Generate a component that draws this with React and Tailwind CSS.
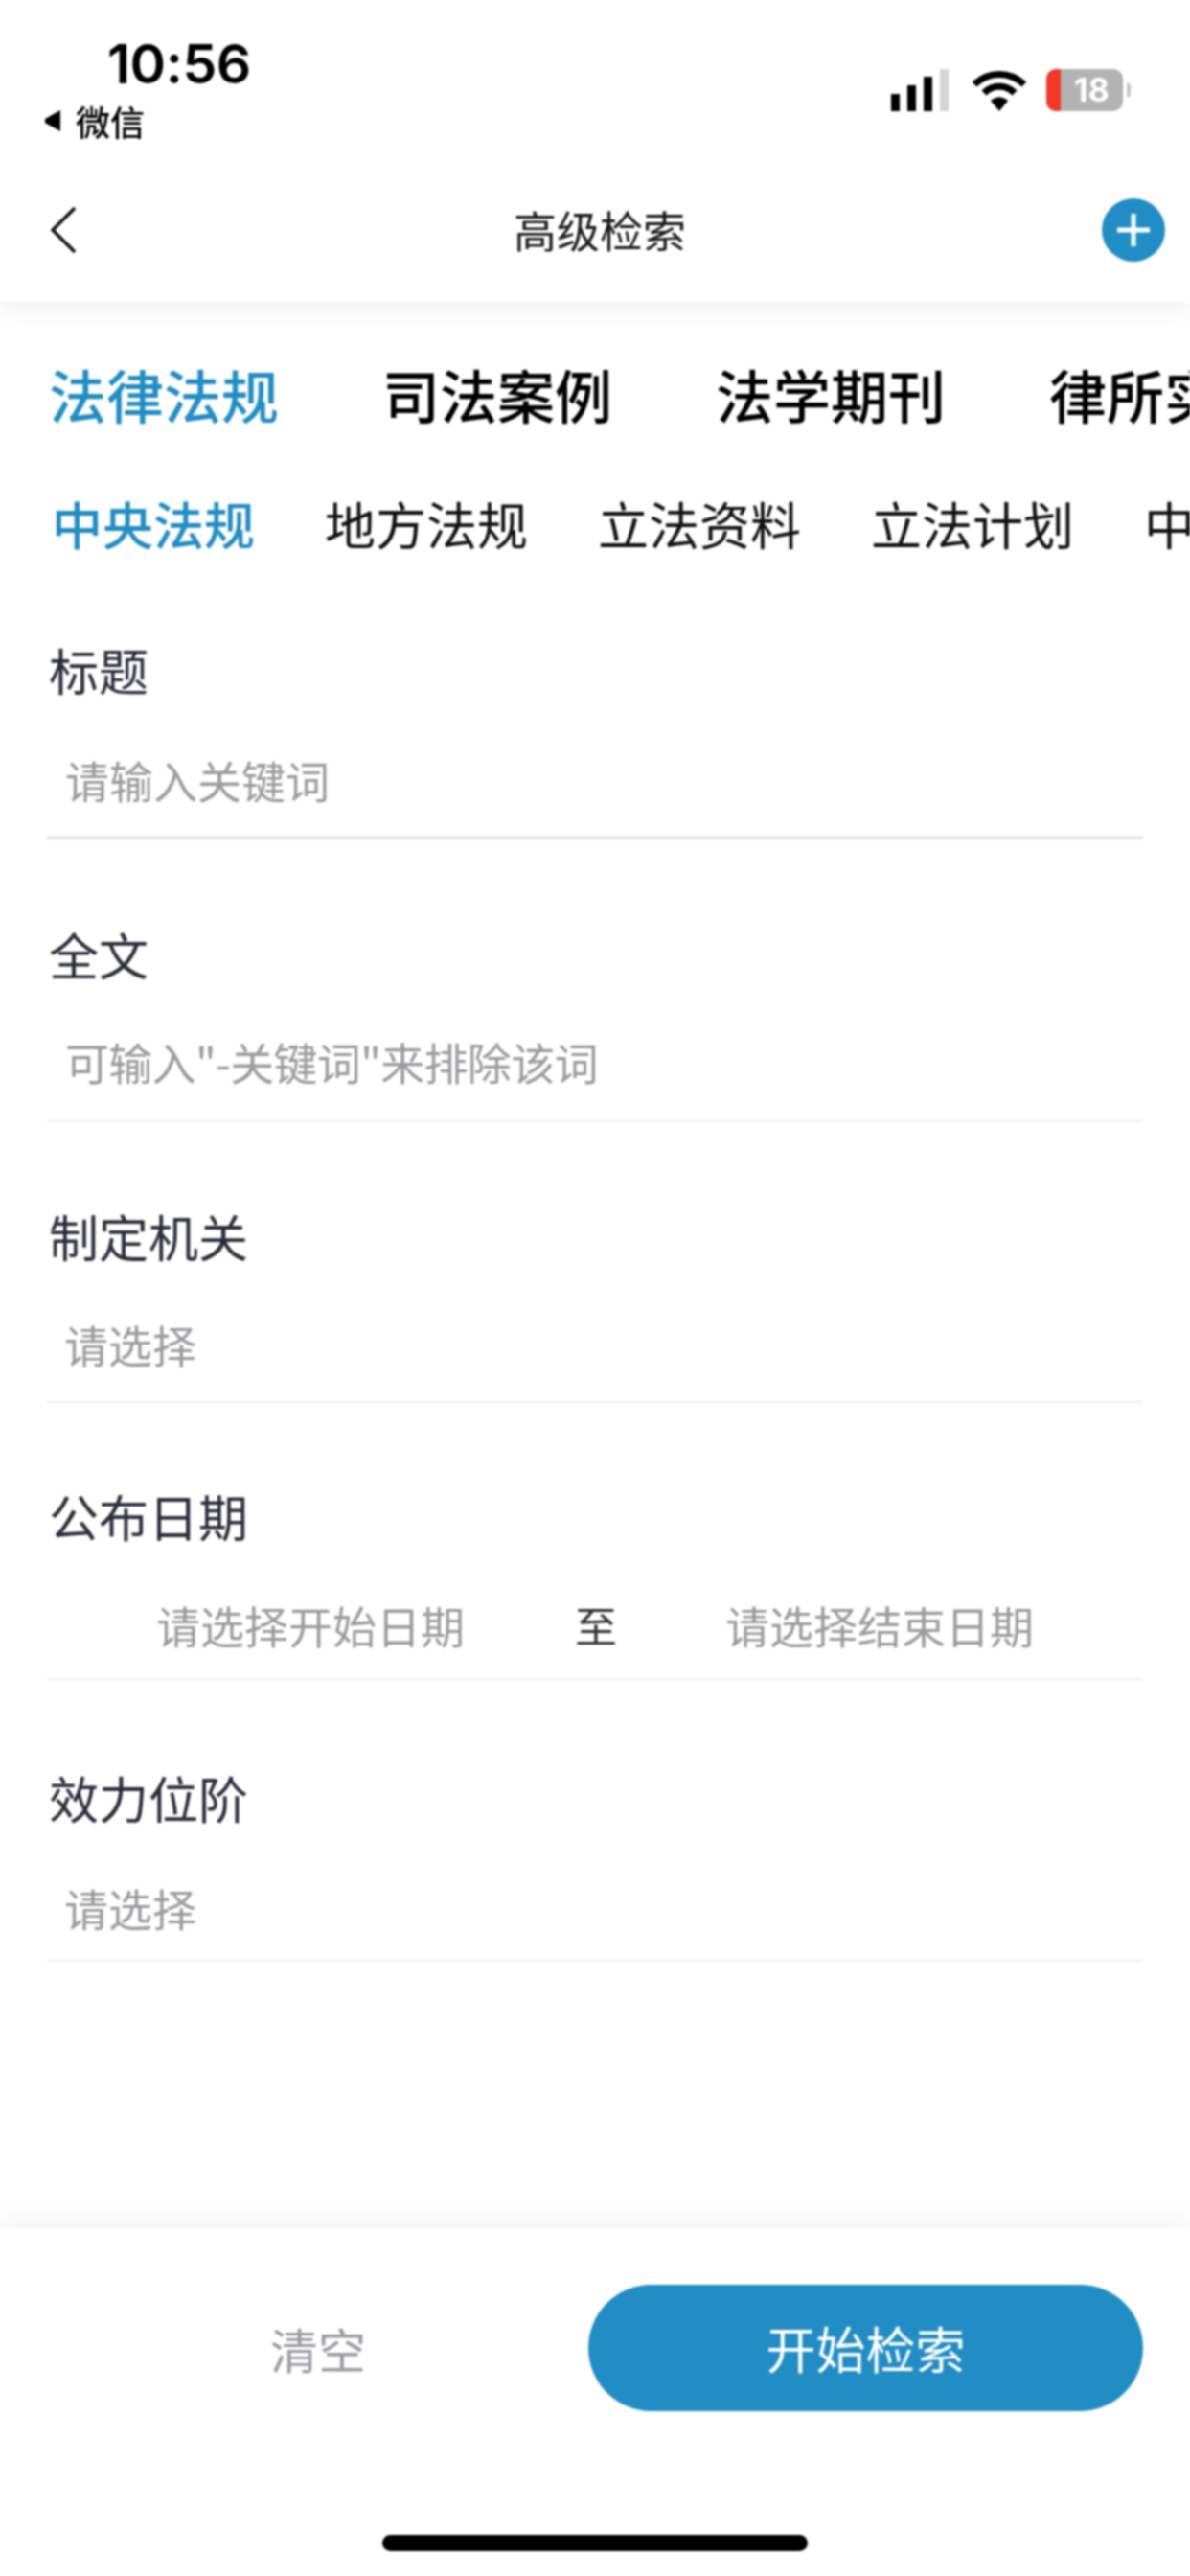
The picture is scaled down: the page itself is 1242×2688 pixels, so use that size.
import React from "react";

const Field = ({ label, mt, gap, line, children }) => (
  <div className={mt}>
    <div className="text-[52px] leading-[52px] text-[#2b2d3a] pl-[51px]">{label}</div>
    <div className={gap}>{children}</div>
    <div className={line}></div>
  </div>
);

export default function App() {
  return (
    <div className="w-[1242px] h-[2688px] overflow-hidden bg-white flex flex-col font-['Noto_Sans_CJK_SC','Noto_Sans',sans-serif] blur-[1.2px]">
      <header className="relative z-10 h-[315px] shrink-0 bg-white shadow-[0_6px_26px_rgba(40,44,60,0.08)]">
        <div className="h-[190px] flex justify-between">
          <div className="pl-[45px] pt-[39px]">
            <div className="pl-[67px] text-[57px] leading-[56px] font-semibold text-black font-['Inter',sans-serif] tracking-[-0.5px]">10:56</div>
            <div className="flex items-center gap-[14px] mt-[11px]">
              <svg width="20" height="24" viewBox="0 0 20 24"><path d="M18 1 L18 23 L2 14 L2 10 Z" fill="#000" /></svg>
              <span className="text-[36px] leading-[40px] font-medium text-black">微信</span>
            </div>
          </div>
          <div className="flex items-start gap-[20px] pt-[72px] pr-[62px]">
            <div className="flex items-end gap-[8px] h-[44px] mr-[4px]">
              <div className="w-[9px] h-[18px] bg-black"></div>
              <div className="w-[9px] h-[27px] bg-black"></div>
              <div className="w-[9px] h-[36px] bg-black"></div>
              <div className="w-[9px] h-[44px] bg-[#d4d4d4]"></div>
            </div>
            <svg width="58" height="44" viewBox="0 0 58 44">
              <path d="M3 16 C18 2 40 2 55 16" fill="none" stroke="#000" strokeWidth="7" />
              <path d="M13 25 C22 16 36 16 45 25" fill="none" stroke="#000" strokeWidth="7" />
              <path d="M20 33 L29 44 L38 33 C32 28 26 28 20 33 Z" fill="#000" />
            </svg>
            <div className="flex items-center">
              <div className="w-[80px] h-[44px] rounded-[10px] overflow-hidden bg-[#b3b3b3] flex">
                <div className="w-[15px] h-full bg-[#f0392b]"></div>
                <div className="flex-1 text-center text-[34px] leading-[44px] font-bold text-white font-['Inter',sans-serif]">18</div>
              </div>
              <div className="w-[4px] h-[14px] ml-[4px] bg-[#c4c4c4] rounded-r-[2px]"></div>
            </div>
          </div>
        </div>
        <div className="h-[100px] flex items-center justify-between pl-[50px] pr-[26px]">
          <svg width="32" height="52" viewBox="0 0 32 52"><path d="M28 3 L5 26 L28 49" fill="none" stroke="#111" strokeWidth="3.5" /></svg>
          <div className="ml-[20px] text-[45px] leading-[46px] text-[#1a1a1a]">高级检索</div>
          <div className="w-[66px] h-[66px] rounded-full bg-[#228dc4] flex items-center justify-center">
            <svg width="38" height="38" viewBox="0 0 38 38"><path d="M19 2 V36 M2 19 H36" stroke="#fff" strokeWidth="5" /></svg>
          </div>
        </div>
      </header>

      <main className="flex-1 min-h-0">
        <div className="mt-[66px] pl-[51px] flex gap-[108px] whitespace-nowrap text-[60px] leading-[60px] font-medium text-black">
          <span className="text-[#228dc4]">法律法规</span>
          <span>司法案例</span>
          <span>法学期刊</span>
          <span>律所实务</span>
        </div>
        <div className="mt-[79px] pl-[54px] flex gap-[73px] whitespace-nowrap text-[53px] leading-[53px] text-[#111]">
          <span className="text-[#228dc4] font-medium">中央法规</span>
          <span>地方法规</span>
          <span>立法资料</span>
          <span>立法计划</span>
          <span>中央文件</span>
        </div>

        <Field label="标题" mt="mt-[100px]" gap="mx-[49px] mt-[65px] h-[46px] pl-[19px] text-[46px] leading-[46px] text-[#9b9b9f] whitespace-nowrap" line="mx-[49px] mt-[36px] h-[4px] bg-[#e6e6e6]">
          请输入关键词
        </Field>
        <Field label="全文" mt="mt-[94px]" gap="mx-[49px] mt-[62px] h-[46px] pl-[19px] text-[46px] leading-[46px] tracking-[-0.7px] text-[#9b9b9f] whitespace-nowrap" line="mx-[49px] mt-[39px] h-[2px] bg-[#eeeeee]">
          可输入"-关键词"来排除该词
        </Field>
        <Field label="制定机关" mt="mt-[93px]" gap="mx-[49px] mt-[63px] h-[46px] pl-[18px] text-[46px] leading-[46px] text-[#9b9b9f] whitespace-nowrap" line="mx-[49px] mt-[37px] h-[2px] bg-[#eeeeee]">
          请选择
        </Field>
        <Field label="公布日期" mt="mt-[92px]" gap="mx-[49px] mt-[64px] h-[46px] pl-[114px] text-[46px] leading-[46px] text-[#9b9b9f] whitespace-nowrap flex items-center" line="mx-[49px] mt-[33px] h-[2px] bg-[#eeeeee]">
          <span className="w-[437px]">请选择开始日期</span>
          <span className="w-[157px] text-[#333] text-[44px]">至</span>
          <span>请选择结束日期</span>
        </Field>
        <Field label="效力位阶" mt="mt-[97px]" gap="mx-[49px] mt-[65px] h-[46px] pl-[18px] text-[46px] leading-[46px] text-[#9b9b9f] whitespace-nowrap" line="mx-[49px] mt-[32px] h-[2px] bg-[#eeeeee]">
          请选择
        </Field>
      </main>

      <footer className="relative h-[363px] shrink-0 bg-white shadow-[0_-6px_26px_rgba(40,44,60,0.06)]">
        <div className="pt-[59px] pr-[49px] flex items-center">
          <div className="w-[614px] pl-[50px] text-center text-[50px] leading-[50px] text-[#9a9aa2]">清空</div>
          <div className="flex-1 h-[132px] rounded-full bg-[#228dc4] flex items-center justify-center text-[52px] leading-[52px] text-white">开始检索</div>
        </div>
        <div className="mt-[129px] mx-auto w-[444px] h-[17px] rounded-full bg-black"></div>
      </footer>
    </div>
  );
}
